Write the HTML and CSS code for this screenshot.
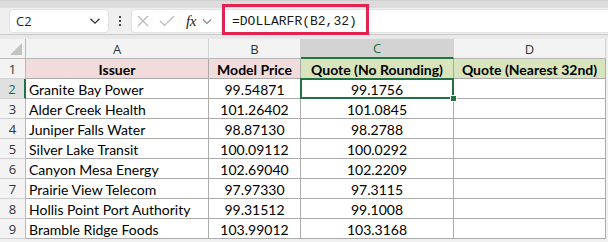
FILE: index.html
```html
<!DOCTYPE html>
<html>
<head>
<meta charset="utf-8">
<link rel="stylesheet" href="styles.css">
</head>
<body>
<div class="app">
  <div class="topstrip"></div>
  <div class="fbar">
    <div class="namebox"><span class="ref">C2</span>
      <svg class="chev" width="12" height="8" viewBox="0 0 12 8"><path d="M1.5 1.8 L6 6.2 L10.5 1.8" fill="none" stroke="#333" stroke-width="1.3"/></svg>
    </div>
    <div class="dots"><i></i><i></i><i></i></div>
    <div class="formula">
      <div class="fbtns">
        <svg width="12" height="12" viewBox="0 0 12 12"><path d="M1 1 L11 11 M11 1 L1 11" stroke="#b9b9b9" stroke-width="1.2" fill="none"/></svg>
        <svg width="16" height="12" viewBox="0 0 16 12"><path d="M1 6 L5.5 10.5 L15 1" stroke="#b9b9b9" stroke-width="1.2" fill="none"/></svg>
        <span class="fx">fx</span>
        <svg width="10" height="7" viewBox="0 0 10 7"><path d="M1 1.5 L5 5.5 L9 1.5" fill="none" stroke="#888" stroke-width="1.1"/></svg>
      </div>
      <div class="ftext">=DOLLARFR(B2,32)</div>
      <div class="mark"></div>
    </div>
  </div>
  <div class="gap"></div>
  <div class="sheet">
    <div class="ch corner"><span class="tri"></span></div>
    <div class="ch">A</div>
    <div class="ch">B</div>
    <div class="ch sel">C</div>
    <div class="ch">D</div>

    <div class="rh">1</div>
    <div class="c hd pink">Issuer</div>
    <div class="c hd pink">Model Price</div>
    <div class="c hd green">Quote (No Rounding)</div>
    <div class="c hd green">Quote (Nearest 32nd)</div>

    <div class="rh rsel">2</div>
    <div class="c">Granite Bay Power</div>
    <div class="c n">99.54871</div>
    <div class="c n active">99.1756<span class="handle"></span></div>
    <div class="c"></div>

    <div class="rh">3</div>
    <div class="c">Alder Creek Health</div>
    <div class="c n">101.26402</div>
    <div class="c n">101.0845</div>
    <div class="c"></div>

    <div class="rh">4</div>
    <div class="c">Juniper Falls Water</div>
    <div class="c n">98.87130</div>
    <div class="c n">98.2788</div>
    <div class="c"></div>

    <div class="rh">5</div>
    <div class="c">Silver Lake Transit</div>
    <div class="c n">100.09112</div>
    <div class="c n">100.0292</div>
    <div class="c"></div>

    <div class="rh">6</div>
    <div class="c">Canyon Mesa Energy</div>
    <div class="c n">102.69040</div>
    <div class="c n">102.2209</div>
    <div class="c"></div>

    <div class="rh">7</div>
    <div class="c">Prairie View Telecom</div>
    <div class="c n">97.97330</div>
    <div class="c n">97.3115</div>
    <div class="c"></div>

    <div class="rh">8</div>
    <div class="c">Hollis Point Port Authority</div>
    <div class="c n">99.31512</div>
    <div class="c n">99.1008</div>
    <div class="c"></div>

    <div class="rh">9</div>
    <div class="c">Bramble Ridge Foods</div>
    <div class="c n">103.99012</div>
    <div class="c n">103.3168</div>
    <div class="c"></div>
  </div>
</div>
</body>
</html>
```

FILE: styles.css
```css
* { box-sizing: border-box; }
html, body { margin: 0; padding: 0; }
body {
  width: 608px;
  height: 242px;
  overflow: hidden;
  background: #f0f0f0;
  font-family: "Open Sans", "Noto Sans", sans-serif;
}
.topstrip {
  height: 8px;
  background: #dcdcdc;
  border-top: 1px solid #cfcfcf;
}
.fbar {
  display: flex;
  align-items: center;
  height: 26px;
  padding: 1px 0 1px 9px;
  background: #efefef;
  position: relative;
}
.namebox {
  width: 100px;
  height: 24px;
  background: #fff;
  border-radius: 4px;
  border: 1px solid #e2e2e2;
  display: flex;
  align-items: center;
  justify-content: space-between;
  padding: 0 7px 0 6px;
}
.ref {
  font-size: 13px;
  color: #1c2a3d;
}
.dots {
  width: 22px;
  display: flex;
  flex-direction: column;
  align-items: center;
  gap: 2px;
}
.dots i {
  display: block;
  width: 2px;
  height: 2px;
  background: #444;
}
.formula {
  flex: 1;
  height: 24px;
  background: #fff;
  border-radius: 4px 0 0 4px;
  border: 1px solid #e2e2e2;
  border-right: none;
  display: flex;
  align-items: center;
  position: relative;
}
.fbtns {
  display: flex;
  align-items: center;
  width: 90px;
  padding-left: 5px;
  gap: 0;
}
.fbtns svg:nth-child(1) { margin-right: 10px; }
.fbtns svg:nth-child(2) { margin-right: 11px; }
.fx {
  font-family: "Liberation Serif", "DejaVu Serif", serif;
  font-style: italic;
  font-size: 15px;
  color: #222;
  margin-right: 6px;
  letter-spacing: -0.5px;
}
.ftext {
  font-family: "Liberation Mono", "DejaVu Sans Mono", monospace;
  font-size: 13px;
  color: #1a1a1a;
  margin-left: 10px;
}
.mark {
  position: absolute;
  left: 90px;
  top: -6px;
  width: 147px;
  height: 31px;
  border: 3px solid #e3234f;
}
.gap {
  height: 5px;
  background: #e8e8e8;
  border-top: 1px solid #c9c9c9;
}
.sheet {
  display: grid;
  grid-template-columns: 26px 183px 92px 153px 152px;
  grid-auto-rows: 20px;
  background: #fff;
  width: 606px;
  font-family: "Lato", "Open Sans", sans-serif;
  font-size: 14px;
}
.ch {
  background: #f3f3f3;
  border-right: 1px solid #d2d2d2;
  border-bottom: 1px solid #b8b8b8;
  display: flex;
  align-items: center;
  justify-content: center;
  font-family: "Open Sans", "Noto Sans", sans-serif;
  font-size: 13px;
  color: #333;
}
.ch.corner { position: relative; border-right-color: #b8b8b8; }
.tri {
  position: absolute;
  right: 3px;
  bottom: 3px;
  width: 0;
  height: 0;
  border-left: 12px solid transparent;
  border-bottom: 12px solid #c3c3c3;
}
.ch.sel {
  background: #d3d3d3;
  color: #1e6e42;
  border-bottom: 2px solid #217346;
}
.rh {
  background: #f3f3f3;
  border-right: 1px solid #b8b8b8;
  border-bottom: 1px solid #d2d2d2;
  display: flex;
  align-items: center;
  justify-content: center;
  font-family: "Open Sans", "Noto Sans", sans-serif;
  font-size: 13px;
  color: #333;
}
.rh.rsel {
  background: #e0e0e0;
  color: #1e6e42;
  border-right: 2px solid #217346;
}
.c {
  border-right: 1px solid #ababab;
  border-bottom: 1px solid #ababab;
  display: flex;
  align-items: center;
  padding: 1px 3px 0 3px;
  color: #000;
  white-space: nowrap;
  overflow: visible;
}
.c.n, .c.hd { justify-content: center; }
.c.hd { font-weight: bold; }
.pink { background: #f2dcdb; }
.green { background: #d8e4bc; }
.c.active { position: relative; }
.c.active::after {
  content: "";
  position: absolute;
  left: -1px;
  top: -1px;
  right: -1px;
  bottom: -1px;
  border: 2px solid #217346;
}
.handle {
  position: absolute;
  right: -4px;
  bottom: -4px;
  width: 7px;
  height: 7px;
  background: #217346;
  border: 1px solid #fff;
  z-index: 2;
}
```
